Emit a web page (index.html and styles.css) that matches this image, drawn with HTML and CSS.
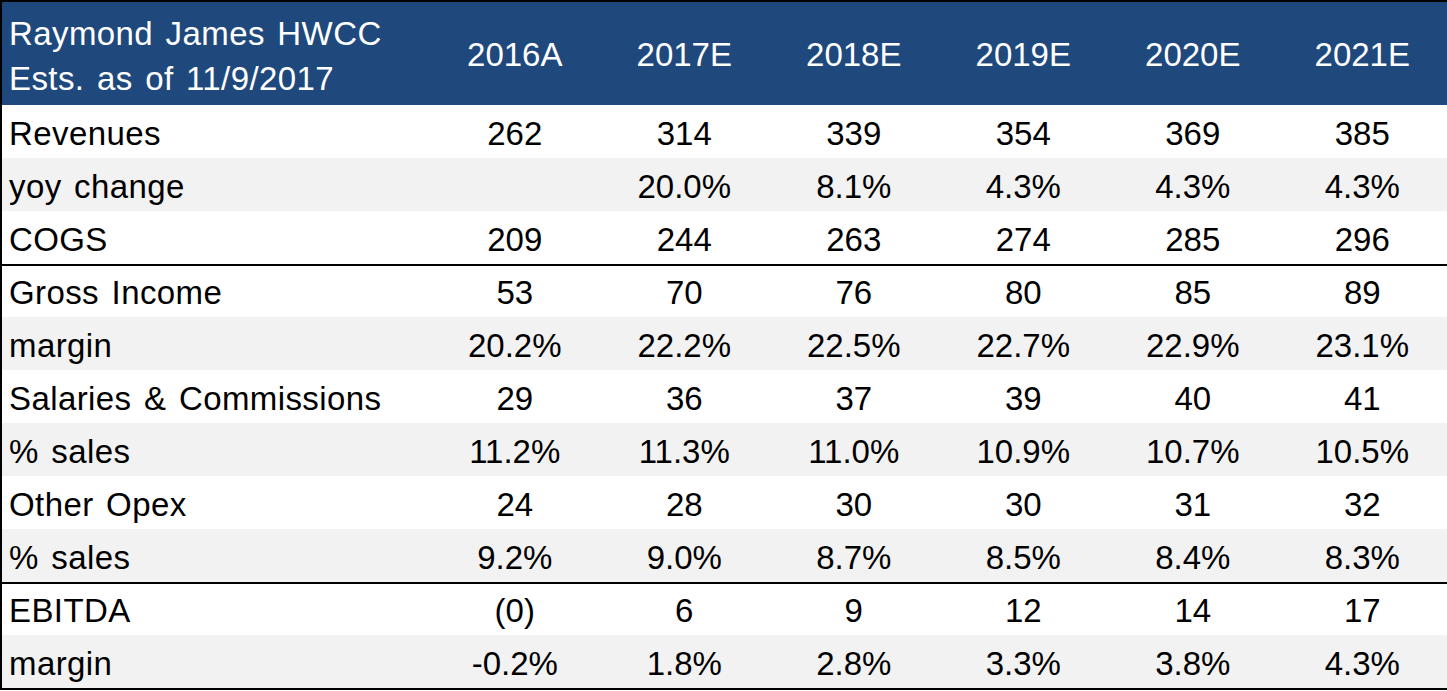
FILE: index.html
```html
<!DOCTYPE html>
<html>
<head>
<meta charset="utf-8">
<link rel="stylesheet" href="styles.css">
</head>
<body>
<div class="sheet">
  <div class="row head">
    <div class="cell label title"><span>Raymond James HWCC</span><span>Ests. as of 11/9/2017</span></div>
    <div class="cell">2016A</div>
    <div class="cell">2017E</div>
    <div class="cell">2018E</div>
    <div class="cell">2019E</div>
    <div class="cell">2020E</div>
    <div class="cell">2021E</div>
  </div>
  <div class="row">
    <div class="cell label">Revenues</div>
    <div class="cell">262</div><div class="cell">314</div><div class="cell">339</div><div class="cell">354</div><div class="cell">369</div><div class="cell">385</div>
  </div>
  <div class="row alt">
    <div class="cell label">yoy change</div>
    <div class="cell"></div><div class="cell">20.0%</div><div class="cell">8.1%</div><div class="cell">4.3%</div><div class="cell">4.3%</div><div class="cell">4.3%</div>
  </div>
  <div class="row">
    <div class="cell label">COGS</div>
    <div class="cell">209</div><div class="cell">244</div><div class="cell">263</div><div class="cell">274</div><div class="cell">285</div><div class="cell">296</div>
  </div>
  <div class="row sep">
    <div class="cell label">Gross Income</div>
    <div class="cell">53</div><div class="cell">70</div><div class="cell">76</div><div class="cell">80</div><div class="cell">85</div><div class="cell">89</div>
  </div>
  <div class="row alt">
    <div class="cell label">margin</div>
    <div class="cell">20.2%</div><div class="cell">22.2%</div><div class="cell">22.5%</div><div class="cell">22.7%</div><div class="cell">22.9%</div><div class="cell">23.1%</div>
  </div>
  <div class="row">
    <div class="cell label">Salaries &amp; Commissions</div>
    <div class="cell">29</div><div class="cell">36</div><div class="cell">37</div><div class="cell">39</div><div class="cell">40</div><div class="cell">41</div>
  </div>
  <div class="row alt">
    <div class="cell label">% sales</div>
    <div class="cell">11.2%</div><div class="cell">11.3%</div><div class="cell">11.0%</div><div class="cell">10.9%</div><div class="cell">10.7%</div><div class="cell">10.5%</div>
  </div>
  <div class="row">
    <div class="cell label">Other Opex</div>
    <div class="cell">24</div><div class="cell">28</div><div class="cell">30</div><div class="cell">30</div><div class="cell">31</div><div class="cell">32</div>
  </div>
  <div class="row alt">
    <div class="cell label">% sales</div>
    <div class="cell">9.2%</div><div class="cell">9.0%</div><div class="cell">8.7%</div><div class="cell">8.5%</div><div class="cell">8.4%</div><div class="cell">8.3%</div>
  </div>
  <div class="row sep">
    <div class="cell label">EBITDA</div>
    <div class="cell">(0)</div><div class="cell">6</div><div class="cell">9</div><div class="cell">12</div><div class="cell">14</div><div class="cell">17</div>
  </div>
  <div class="row alt">
    <div class="cell label">margin</div>
    <div class="cell">-0.2%</div><div class="cell">1.8%</div><div class="cell">2.8%</div><div class="cell">3.3%</div><div class="cell">3.8%</div><div class="cell">4.3%</div>
  </div>
</div>
</body>
</html>
```
FILE: styles.css
```css
html, body {
  margin: 0;
  padding: 0;
  background: #ffffff;
}

.sheet {
  width: 1447px;
  box-sizing: border-box;
  border-top: 2px solid #000;
  border-left: 2px solid #000;
  border-bottom: 2px solid #000;
  font-family: "Liberation Sans", Arial, sans-serif;
  font-size: 33px;
  color: #000;
}

.row {
  display: grid;
  grid-template-columns: 428px repeat(6, 1fr);
  height: 53px;
  box-sizing: border-box;
  background: #ffffff;
}

.row.alt {
  background: #f2f2f2;
}

.row.sep {
  border-top: 2px solid #000;
}

.row.head {
  height: 103px;
  background: #1f497d;
  color: #ffffff;
}

.cell {
  display: flex;
  align-items: center;
  justify-content: center;
  padding-top: 5px;
  box-sizing: border-box;
  white-space: nowrap;
}

.row.sep .cell {
  padding-top: 3px;
}

.cell.label {
  justify-content: flex-start;
  padding-left: 7px;
  letter-spacing: 0.4px;
  word-spacing: 3px;
}

.head .cell {
  padding-top: 3px;
}

.head .cell.title {
  flex-direction: column;
  align-items: flex-start;
  justify-content: center;
  line-height: 45px;
  padding-top: 4px;
}
```
